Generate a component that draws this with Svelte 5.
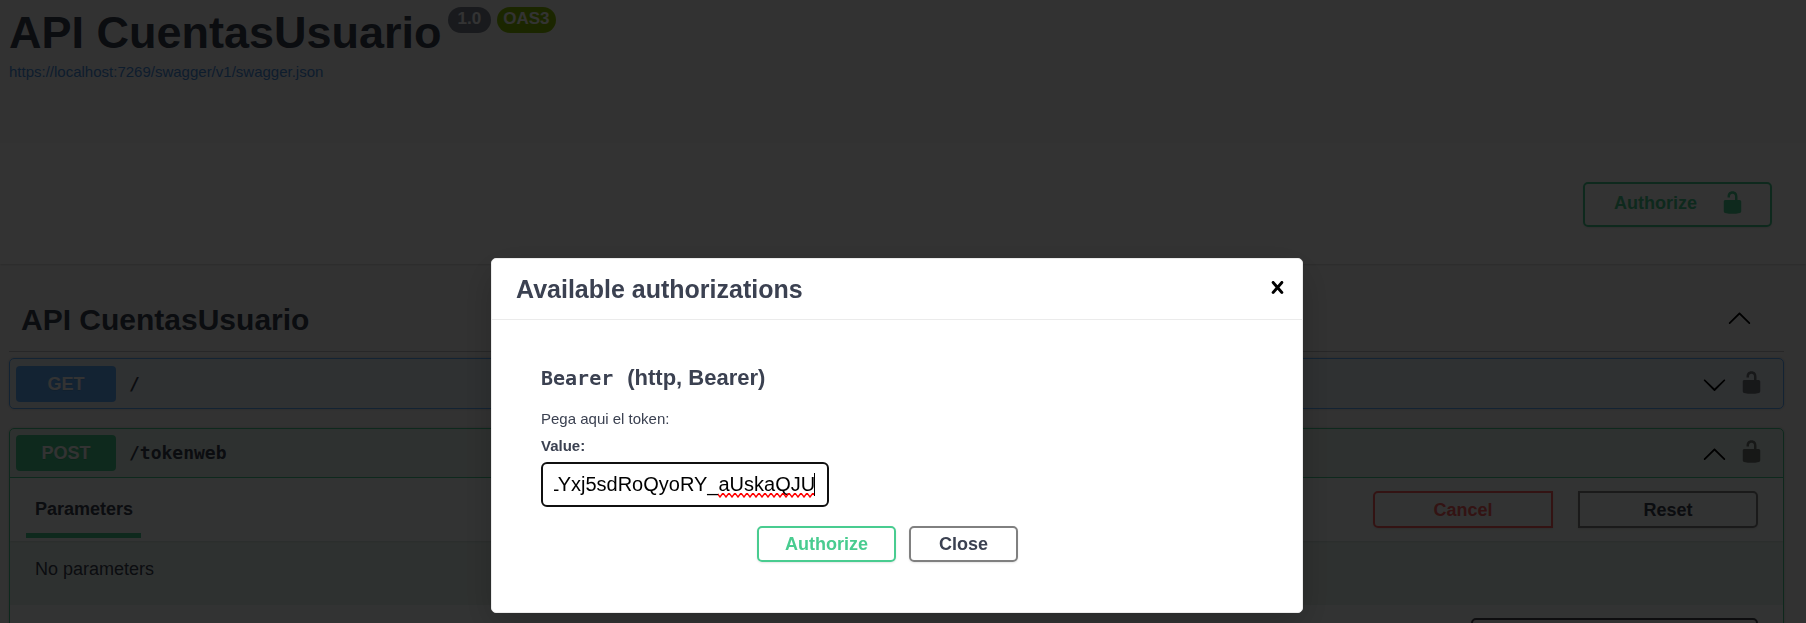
<script lang="ts">
  import { onMount } from 'svelte';

  let token = $state('LYxj5sdRoQyoRY_aUskaQJU');
  let field: HTMLInputElement;

  // keep the end of a long token in view
  onMount(() => {
    field.focus({ preventScroll: true });
    field.setSelectionRange(token.length, token.length);
    field.scrollLeft = field.scrollWidth;
  });
</script>

{#snippet arrow(dir: string)}
  <svg class="icon" viewBox="0 0 20 20" aria-hidden="true">
    {#if dir === 'up'}
      <path d="M17.418 14.908c.272.268.709.268.979 0s.271-.701 0-.969l-7.908-7.83c-.27-.268-.707-.268-.979 0l-7.908 7.83c-.27.268-.27.701 0 .969.271.268.709.268.979 0L10 7.767l7.418 7.141z" />
    {:else}
      <path d="M17.418 6.109c.272-.268.709-.268.979 0s.271.701 0 .969l-7.908 7.83c-.27.268-.707.268-.979 0l-7.908-7.83c-.27-.268-.27-.701 0-.969.271-.268.709-.268.979 0L10 13.25l7.418-7.141z" />
    {/if}
  </svg>
{/snippet}

{#snippet unlocked()}
  <svg class="icon" viewBox="0 0 20 20" aria-hidden="true">
    <path d="M15.8 8H14V5.6C14 2.703 12.665 1 10 1 7.334 1 6 2.703 6 5.6V6h2v-.801C8 3.754 8.797 3 10 3c1.203 0 2 .754 2 2.199V8H4c-.553 0-1 .646-1 1.199V17c0 .549.428 1.139.951 1.307l1.197.387C5.672 18.861 6.55 19 7.1 19h5.8c.549 0 1.428-.139 1.951-.307l1.196-.387c.524-.167.953-.757.953-1.306V9.199C17 8.646 16.352 8 15.8 8z" />
  </svg>
{/snippet}

{#snippet summary(method: string, path: string, dir: string)}
  <div class="summary">
    <span class="method">{method}</span>
    <span class="path">{path}</span>
    <button class="icon-btn" aria-label="Toggle {path}">{@render arrow(dir)}</button>
    <button class="icon-btn lock" aria-label="Authorization for {path}">{@render unlocked()}</button>
  </div>
{/snippet}

<div class="page">
  <header class="info">
    <div class="title">
      <h1>API CuentasUsuario</h1>
      <span class="version">1.0</span>
      <span class="version oas">OAS3</span>
    </div>
    <a href="#spec">https://localhost:7269/swagger/v1/swagger.json</a>
  </header>

  <div class="scheme">
    <button class="btn authorize with-icon"><span>Authorize</span>{@render unlocked()}</button>
  </div>

  <main>
    <div class="tag">
      <h2>API CuentasUsuario</h2>
      <button class="icon-btn" aria-label="Collapse operations">{@render arrow('up')}</button>
    </div>

    <div class="opblock get">
      {@render summary('GET', '/', 'down')}
    </div>

    <div class="opblock post">
      {@render summary('POST', '/tokenweb', 'up')}
      <div class="section-header">
        <h3 class="tab">Parameters</h3>
        <div class="btn-group">
          <button class="btn cancel">Cancel</button>
          <button class="btn reset">Reset</button>
        </div>
      </div>
      <p class="empty">No parameters</p>
      <div class="section-header body-header">
        <select aria-label="Request content type"><option></option></select>
      </div>
    </div>
  </main>
</div>

<div class="backdrop">
  <div class="modal" role="dialog" aria-modal="true" aria-labelledby="modal-title">
    <div class="modal-header">
      <h2 id="modal-title">Available authorizations</h2>
      <button class="icon-btn" aria-label="Close dialog">
        <svg class="icon" viewBox="0 0 20 20" aria-hidden="true">
          <path d="M14.348 14.849c-.469.469-1.229.469-1.697 0L10 11.819l-2.651 3.029c-.469.469-1.229.469-1.697 0-.469-.469-.469-1.229 0-1.697l2.758-3.15-2.759-3.152c-.469-.469-.469-1.228 0-1.697.469-.469 1.228-.469 1.697 0L10 8.183l2.651-3.031c.469-.469 1.228-.469 1.697 0 .469.469.469 1.229 0 1.697l-2.758 3.152 2.758 3.15c.469.469.469 1.229 0 1.698z" />
        </svg>
      </button>
    </div>
    <form class="modal-body" onsubmit={(e) => e.preventDefault()}>
      <h4><code>Bearer</code><span>(http, Bearer)</span></h4>
      <p>Pega aqui el token:</p>
      <label for="token">Value:</label>
      <div class="field">
        <input id="token" type="text" bind:value={token} bind:this={field} spellcheck="false" autocomplete="off" />
        <svg class="squiggle" width="96" height="5" aria-hidden="true">
          <defs>
            <pattern id="wave" width="6" height="5" patternUnits="userSpaceOnUse">
              <path d="M-1 0 L2 4 L5 0 L8 4" />
            </pattern>
          </defs>
          <rect width="96" height="5" fill="url(#wave)" />
        </svg>
        <span class="caret"></span>
      </div>
      <div class="actions">
        <button class="btn authorize" type="submit">Authorize</button>
        <button class="btn done" type="button">Close</button>
      </div>
    </form>
  </div>
</div>

<style>
  :global(body) {
    margin: 0;
    background: #fafafa;
    color: #3b4151;
    font-family: 'Liberation Sans', Arial, sans-serif;
    font-size: 18px;
  }
  h1, h2, h3, h4, p { margin: 0; }
  .page {
    height: 100vh;
    overflow: hidden;
  }
  .icon {
    display: block;
    width: 25px;
    height: 25px;
    fill: currentColor;
  }
  .icon-btn {
    padding: 0;
    border: none;
    background: none;
    color: #000;
    cursor: pointer;
  }
  .btn {
    box-sizing: border-box;
    min-height: 36px;
    padding: 0 28px;
    border: 2px solid #808080;
    border-radius: 5px;
    background: transparent;
    box-shadow: 0 1px 2px rgba(0, 0, 0, 0.1);
    color: #3b4151;
    font: bold 18px/20px 'Liberation Sans', Arial, sans-serif;
    cursor: pointer;
  }
  .authorize {
    padding: 0 26px;
    border-color: #49cc90;
    color: #49cc90;
  }

  .info { padding: 7px 9px 63px; }
  .title {
    display: flex;
    align-items: flex-start;
    gap: 6px;
    margin-bottom: 5px;
  }
  h1 { font-size: 45px; line-height: 51px; }
  .version {
    padding: 0 10px 2px;
    border-radius: 13px;
    background: #7d8492;
    color: #fff;
    font-size: 17px;
    font-weight: bold;
    line-height: 24px;
  }
  .oas {
    padding-left: 6px;
    padding-right: 6px;
    background: #89bf04;
  }
  .info a {
    display: block;
    color: #4990e2;
    font-size: 15px;
    line-height: 17px;
    text-decoration: none;
  }

  .scheme {
    display: flex;
    justify-content: flex-end;
    padding: 39px 34px 37px;
    background: #fff;
    box-shadow: 0 1px 2px rgba(0, 0, 0, 0.15);
  }
  .with-icon {
    display: flex;
    align-items: center;
    gap: 23px;
    padding: 6px 25px 10px 29px;
  }

  main { padding: 38px 22px 0 9px; }
  .tag {
    display: flex;
    align-items: center;
    justify-content: space-between;
    padding: 0 32px 14px 12px;
    border-bottom: 1px solid rgba(59, 65, 81, 0.3);
    margin-bottom: 6px;
  }
  .tag h2 { font-size: 30px; line-height: 35px; }
  .tag .icon-btn { padding-bottom: 4px; }

  .opblock {
    margin-bottom: 19px;
    border: 1px solid var(--tone);
    border-radius: 5px;
    background: var(--tint);
    box-shadow: 0 0 3px rgba(0, 0, 0, 0.19);
  }
  .get { --tone: #61affe; --tint: rgba(97, 175, 254, 0.1); }
  .post { --tone: #49cc90; --tint: rgba(73, 204, 144, 0.1); }
  .summary {
    display: flex;
    align-items: center;
    padding: 6px 19px 6px 6px;
  }
  .get .summary { padding-top: 7px; }
  .post .summary { border-bottom: 1px solid var(--tone); }
  .method {
    width: 100px;
    border-radius: 4px;
    background: var(--tone);
    color: #fff;
    font-weight: bold;
    line-height: 36px;
    text-align: center;
    text-shadow: 0 1px 0 rgba(0, 0, 0, 0.1);
  }
  .path {
    flex: 1;
    padding-left: 13px;
    font: bold 18px/24px 'DejaVu Sans Mono', monospace;
  }
  .lock {
    margin-left: 12px;
    padding-bottom: 4px;
    opacity: 0.5;
  }

  .section-header {
    display: flex;
    align-items: flex-start;
    justify-content: space-between;
    padding: 13px 25px 3px 16px;
    background: rgba(255, 255, 255, 0.8);
    box-shadow: 0 1px 2px rgba(0, 0, 0, 0.1);
  }
  .tab {
    padding: 9px 8px 14px 9px;
    border-bottom: 5px solid #49cc90;
    font-size: 18px;
    line-height: 19px;
  }
  .btn-group { display: flex; gap: 25px; }
  .btn-group .btn { width: 180px; min-height: 37px; }
  .cancel { border-color: #ff6060; border-radius: 5px 0 0 5px; color: #ff6060; }
  .reset { border-radius: 0 5px 5px 0; }
  .empty { padding: 18px 25px 26px; line-height: 20px; }
  .body-header { justify-content: flex-end; padding-top: 13px; }
  select {
    width: 287px;
    height: 40px;
    border: 2px solid #41444e;
    border-radius: 5px;
    background: #f7f7f7;
    appearance: none;
  }

  .backdrop {
    position: fixed;
    inset: 0;
    display: flex;
    justify-content: center;
    align-items: flex-start;
    padding: 258px 12px 0 0;
    background: rgba(0, 0, 0, 0.8);
  }
  .modal {
    box-sizing: border-box;
    width: 100%;
    max-width: 812px;
    border: 1px solid #ebebeb;
    border-radius: 5px;
    background: #fff;
    box-shadow: 0 12px 38px rgba(0, 0, 0, 0.2);
  }
  .modal-header {
    display: flex;
    align-items: flex-start;
    justify-content: space-between;
    padding: 16px 12px 15px 24px;
    border-bottom: 1px solid #ebebeb;
  }
  .modal-header h2 { font-size: 25px; line-height: 29px; }
  .modal-body {
    display: flex;
    flex-direction: column;
    align-items: flex-start;
    padding: 45px 50px 50px 49px;
    font-size: 15px;
    line-height: 17px;
  }
  h4 {
    display: flex;
    align-items: baseline;
    gap: 14px;
    margin-bottom: 19px;
    font-size: 22px;
    line-height: 26px;
  }
  code {
    font: bold 20px/26px 'DejaVu Sans Mono', monospace;
  }
  .modal-body p { margin-bottom: 10px; }
  label { margin-bottom: 8px; font-weight: bold; }
  .field {
    position: relative;
    margin-bottom: 19px;
  }
  .field input {
    display: block;
    box-sizing: border-box;
    width: 288px;
    height: 45px;
    padding: 0 12px 0 11px;
    border: 2px solid #101010;
    border-radius: 6px;
    outline: none;
    background: #fff;
    color: #000;
    caret-color: transparent;
    font: 20px 'Liberation Sans', Arial, sans-serif;
  }
  .squiggle {
    position: absolute;
    right: 15px;
    bottom: 9px;
  }
  .squiggle path { fill: none; stroke: #f00; stroke-width: 1.4; }
  .caret {
    position: absolute;
    top: 11px;
    right: 14px;
    width: 1px;
    height: 23px;
    background: #000;
  }
  .actions {
    display: flex;
    align-self: center;
    gap: 13px;
  }
  .done { margin-right: 18px; }
</style>
